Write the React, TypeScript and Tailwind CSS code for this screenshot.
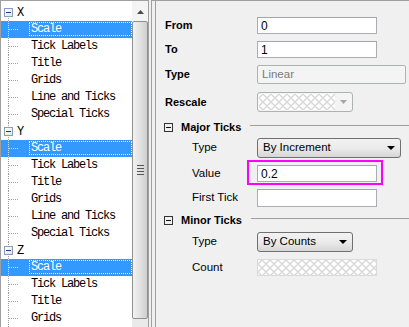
import React from "react";

type Group = { name: string; items: string[] };

const groups: Group[] = [
  { name: "X", items: ["Scale", "Tick Labels", "Title", "Grids", "Line and Ticks", "Special Ticks"] },
  { name: "Y", items: ["Scale", "Tick Labels", "Title", "Grids", "Line and Ticks", "Special Ticks"] },
  { name: "Z", items: ["Scale", "Tick Labels", "Title", "Grids"] },
];

function TreeBox() {
  return (
    <span className="absolute left-[3px] top-[4px] flex h-[9px] w-[9px] items-center justify-center border border-[#8b9db1] bg-gradient-to-br from-white to-[#dfe4ea]">
      <span className="h-px w-[5px] bg-[#1e3f82]" />
    </span>
  );
}

function ParentRow({ name, first }: { name: string; first: boolean }) {
  return (
    <div className="relative flex h-[17px] items-center pl-[16px]">
      {first ? (
        <span className="absolute bottom-0 left-[7px] top-[12px] border-l border-dotted border-[#a0a0a0]" />
      ) : (
        <span className="absolute bottom-0 left-[7px] top-0 border-l border-dotted border-[#a0a0a0]" />
      )}
      <TreeBox />
      <span className="text-black">{name}</span>
    </div>
  );
}

function ChildRow({ label, selected }: { label: string; selected: boolean }) {
  return (
    <div className={"relative flex h-[17px] items-stretch pl-[28px] " + (selected ? "bg-[#3399ff] text-white" : "text-black")}>
      <span className={"absolute bottom-0 left-[7px] top-0 border-l border-dotted " + (selected ? "border-[#c8e0ff]" : "border-[#a0a0a0]")} />
      <span className={"absolute left-[8px] top-[8px] w-[9px] border-t border-dotted " + (selected ? "border-[#c8e0ff]" : "border-[#a0a0a0]")} />
      <span
        className={
          "mb-[2px] mt-[1px] flex flex-1 items-center border pl-px " +
          (selected ? "border-dotted border-white" : "border-transparent")
        }
      >
        {label}
      </span>
    </div>
  );
}

function Scrollbar() {
  return (
    <div className="flex w-[16px] flex-col bg-[#f4f4f4]">
      <div className="flex h-[20px] items-center justify-center pt-px">
        <svg width="7" height="4" viewBox="0 0 7 4">
          <polygon points="3.5,0 7,4 0,4" fill="#4a4a4a" />
        </svg>
      </div>
      <div className="flex h-[298px] flex-col items-center justify-center rounded-[2px] border border-[#8e8f8f] bg-gradient-to-r from-[#f2f2f2] via-[#e2e2e2] to-[#cfcfcf]">
        <div className="flex flex-col gap-[2px]">
          <span className="h-px w-[7px] bg-[#555]" />
          <span className="h-px w-[7px] bg-[#555]" />
          <span className="h-px w-[7px] bg-[#555]" />
          <span className="h-px w-[7px] bg-[#555]" />
        </div>
      </div>
      <div className="flex-1 bg-[#eaeaea]" />
    </div>
  );
}

function Hatch({ w, h, id }: { w: number; h: number; id: string }) {
  return (
    <svg width={w} height={h} className="block">
      <defs>
        <pattern id={id} width="8" height="8" patternUnits="userSpaceOnUse">
          <path d="M0 4 L4 0 L8 4 L4 8 Z" fill="none" stroke="#d6d6d6" strokeWidth="1.3" />
        </pattern>
      </defs>
      <rect width="100%" height="100%" fill={`url(#${id})`} />
    </svg>
  );
}

function TextBox({ value, className = "" }: { value?: string; className?: string }) {
  return (
    <div
      className={
        "flex h-[17px] w-[120px] items-center border border-[#abadb3] border-t-[#a3a5ab] bg-white pl-[3px] text-[12px] text-black " +
        className
      }
    >
      {value}
    </div>
  );
}

function Combo({ value, width }: { value: string; width: string }) {
  return (
    <div
      className={
        "flex h-[20px] items-center justify-between rounded-[3px] border border-[#707070] bg-gradient-to-b from-[#f2f2f2] via-[#ebebeb] to-[#d6d6d6] pl-[5px] pr-[5px] text-[11.5px] text-black " +
        width
      }
    >
      <span>{value}</span>
      <svg width="8" height="4" viewBox="0 0 8 4">
        <polygon points="0,0 8,0 4,4" fill="#000" />
      </svg>
    </div>
  );
}

function GroupHeader({ title }: { title: string }) {
  return (
    <div className="relative flex h-[14px] items-center pl-[8px]">
      <span className="flex h-[9px] w-[9px] items-center justify-center border border-[#333]">
        <span className="h-px w-[5px] bg-[#111]" />
      </span>
      <span className="ml-[8px] text-[11px] font-bold text-black">{title}</span>
      <span className="ml-[9px] mt-[-4px] h-px flex-1 bg-[#a0a0a0]" />
    </div>
  );
}

export default function App() {
  return (
    <div className="flex h-[327px] w-[409px] overflow-hidden bg-[#f0f0f0] font-['Liberation_Sans',Arial,sans-serif]">
      {/* Left tree pane */}
      <div className="flex h-[340px] w-[149px] shrink-0 border border-[#a0a0a0] bg-white">
        <div className="flex w-[131px] flex-col overflow-hidden pt-[3px] font-['Liberation_Mono','Courier_New',monospace] text-[12px] tracking-[-1.2px]">
          {groups.map((g, gi) => (
            <React.Fragment key={g.name}>
              <ParentRow name={g.name} first={gi === 0} />
              {g.items.map((it, ii) => (
                <ChildRow key={it} label={it} selected={ii === 0} />
              ))}
            </React.Fragment>
          ))}
        </div>
        <Scrollbar />
      </div>

      {/* Right property pane */}
      <div className="ml-[2px] flex flex-1 border-l border-t border-[#a0a0a0]">
        <div className="ml-[3px] flex flex-1 flex-col border-l border-[#a0a0a0] pt-px">
          {/* From */}
          <div className="mt-[15px] flex h-[17px] items-center">
            <span className="w-[101px] pl-[9px] text-[11px] font-bold text-black">From</span>
            <TextBox value="0" />
          </div>
          {/* To */}
          <div className="mt-[7px] flex h-[17px] items-center">
            <span className="w-[101px] pl-[9px] text-[11px] font-bold text-black">To</span>
            <TextBox value="1" />
          </div>
          {/* Type */}
          <div className="mt-[7px] flex h-[19px] items-center">
            <span className="w-[101px] pl-[9px] text-[11px] font-bold text-black">Type</span>
            <div className="flex h-[19px] w-[149px] items-center rounded-[2px] border border-[#adb2b5] bg-[#f4f4f4] pl-[4px] text-[11.5px] text-[#7a7a7a]">
              Linear
            </div>
          </div>
          {/* Rescale */}
          <div className="mt-[8px] flex h-[20px] items-center">
            <span className="w-[101px] pl-[9px] text-[11px] font-bold text-black">Rescale</span>
            <div className="flex h-[20px] w-[96px] items-center rounded-[3px] border border-[#adb2b5] bg-[#f4f4f4] pl-px">
              <div className="bg-white">
                <Hatch w={76} h={16} id="hatchA" />
              </div>
              <div className="flex flex-1 items-center justify-center">
                <svg width="7" height="4" viewBox="0 0 7 4">
                  <polygon points="0,0 7,0 3.5,4" fill="#a6a6a6" />
                </svg>
              </div>
            </div>
          </div>

          {/* Major Ticks */}
          <div className="mt-[8px]">
            <GroupHeader title="Major Ticks" />
          </div>
          <div className="mt-[4px] flex h-[20px] items-center">
            <span className="w-[101px] pl-[36px] text-[11.5px] text-black">Type</span>
            <Combo value="By Increment" width="w-[144px]" />
          </div>
          <div className="mt-[7px] flex h-[17px] items-center">
            <span className="w-[101px] pl-[36px] text-[11.5px] text-black">Value</span>
            <div className="relative">
              <span className="absolute left-[-10px] top-[-5px] h-[25px] w-[136px] border-2 border-[#ff00ff]" />
              <TextBox value="0.2" />
            </div>
          </div>
          <div className="mt-[7px] flex h-[18px] items-center">
            <span className="w-[101px] pl-[36px] text-[11.5px] text-black">First Tick</span>
            <TextBox className="h-[18px]" />
          </div>

          {/* Minor Ticks */}
          <div className="mt-[6px]">
            <GroupHeader title="Minor Ticks" />
          </div>
          <div className="mt-[5px] flex h-[20px] items-center">
            <span className="w-[101px] pl-[36px] text-[11.5px] text-black">Type</span>
            <Combo value="By Counts" width="w-[96px]" />
          </div>
          <div className="mt-[7px] flex h-[17px] items-center">
            <span className="w-[101px] pl-[36px] text-[11.5px] text-black">Count</span>
            <div className="h-[17px] w-[120px] border border-[#d9d9d9] bg-white">
              <Hatch w={118} h={15} id="hatchB" />
            </div>
          </div>
        </div>
      </div>
    </div>
  );
}
